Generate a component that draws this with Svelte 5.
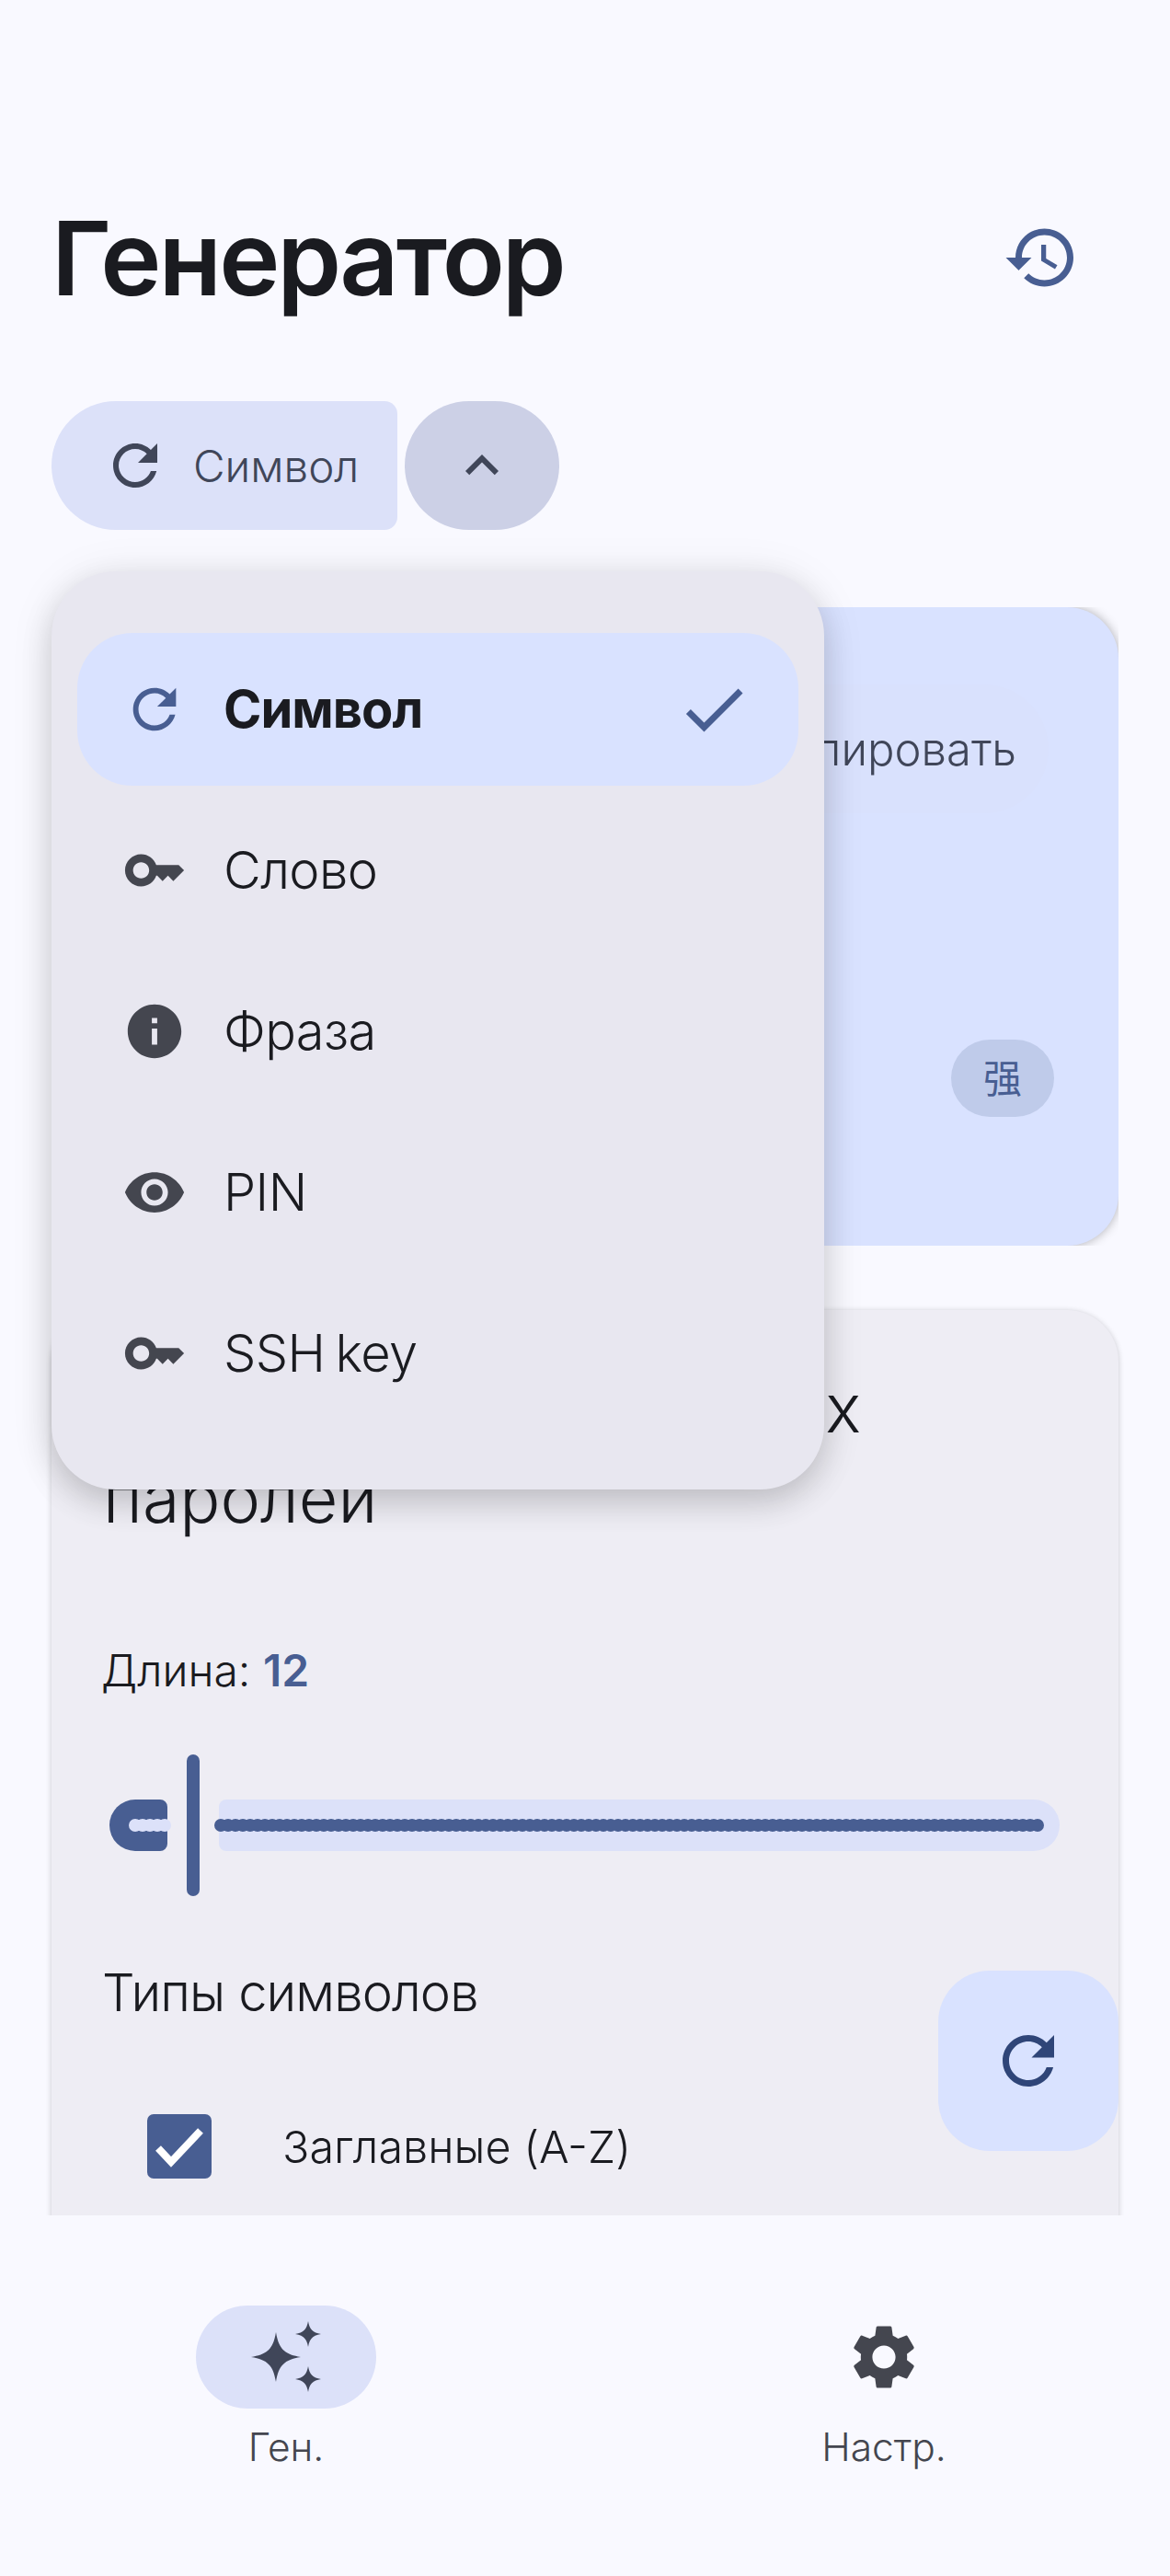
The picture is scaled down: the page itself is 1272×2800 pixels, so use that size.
<script lang="ts">
    const refresh = 'M17.65 6.35C16.2 4.9 14.21 4 12 4c-4.42 0-7.99 3.58-7.99 8s3.57 8 7.99 8c3.73 0 6.84-2.55 7.73-6h-2.08c-.82 2.33-3.04 4-5.65 4-3.31 0-6-2.69-6-6s2.69-6 6-6c1.66 0 3.14.69 4.22 1.78L13 11h7V4l-2.35 2.35z';
    const key = 'M21 10h-8.35C11.83 7.67 9.61 6 7 6c-3.31 0-6 2.69-6 6s2.69 6 6 6c2.61 0 4.83-1.67 5.65-4H13l2 2 2-2 2 2 4-4.04L21 10zM7 15c-1.65 0-3-1.35-3-3s1.35-3 3-3 3 1.35 3 3-1.35 3-3 3z';
    const info = 'M12 2C6.48 2 2 6.48 2 12s4.48 10 10 10 10-4.48 10-10S17.52 2 12 2zm1 15h-2v-6h2v6zm0-8h-2V7h2v2z';
    const eye = 'M12 4.5C7 4.5 2.73 7.61 1 12c1.73 4.39 6 7.5 11 7.5s9.27-3.11 11-7.5c-1.73-4.39-6-7.5-11-7.5zM12 17c-2.76 0-5-2.24-5-5s2.24-5 5-5 5 2.24 5 5-2.24 5-5 5zm0-8c-1.66 0-3 1.34-3 3s1.34 3 3 3 3-1.34 3-3-1.34-3-3-3z';

    const items = [
        { label: 'Символ', icon: refresh, selected: true },
        { label: 'Слово', icon: key, selected: false },
        { label: 'Фраза', icon: info, selected: false },
        { label: 'PIN', icon: eye, selected: false },
        { label: 'SSH key', icon: key, selected: false }
    ];
</script>

<div class="screen">
    <header class="top">
        <h1>Генератор</h1>
        <button class="icon-btn" aria-label="История">
            <svg viewBox="0 0 24 24" width="84" height="84"><path d="M13 3c-4.97 0-9 4.03-9 9H1l3.89 3.89.07.14L9 12H6c0-3.87 3.13-7 7-7s7 3.13 7 7-3.13 7-7 7c-1.93 0-3.68-.79-4.94-2.06l-1.42 1.42C8.27 19.99 10.51 21 13 21c4.97 0 9-4.03 9-9s-4.03-9-9-9zm-1 5v5l4.28 2.54.72-1.21-3.5-2.08V8H12z"/></svg>
        </button>
    </header>

    <div class="split">
        <button class="split-main">
            <svg viewBox="0 0 24 24" width="72" height="72"><path d={refresh}/></svg>
            <span>Символ</span>
        </button>
        <button class="split-toggle" aria-label="Свернуть">
            <svg viewBox="0 0 24 24" width="72" height="72"><path d="M12 8l-6 6 1.41 1.41L12 10.83l4.59 4.58L18 14z"/></svg>
        </button>
    </div>

    <main class="scroll">
        <div class="result-clip">
            <section class="result">
                <div class="copy">Копировать</div>
                <div class="chip">强</div>
            </section>
        </div>

        <section class="options">
            <h2>Настройки безопасных<br>паролей</h2>
            <p class="length">Длина: <b>12</b></p>

            <div class="slider">
                <div class="stop"></div>
                <div class="thumb"></div>
                <div class="track"></div>
                <svg class="wave" width="1034" height="14" viewBox="0 0 1034 14">
                    <line class="wave-off" x1="35" y1="7" x2="68" y2="7"/>
                    <line class="wave-on" x1="128" y1="7" x2="1017" y2="7"/>
                </svg>
            </div>

            <h3>Типы символов</h3>
            <div class="check-row">
                <span class="box">
                    <svg viewBox="0 0 70 70" width="70" height="70"><path d="M12 37l14 15 32-34" /></svg>
                </span>
                <span>Заглавные (A-Z)</span>
            </div>
        </section>
    </main>

    <nav class="bottom">
        <div class="tab">
            <span class="pill active">
                <svg viewBox="0 0 196 112" width="196" height="112">
                    <path d="M87 29c3 18 9 24 27 27-18 3-24 9-27 27-3-18-9-24-27-27 18-3 24-9 27-27z"/>
                    <path d="M122 17c1.500 9 5 12.500 14 14-9 1.500-12.500 5-14 14-1.500-9-5-12.500-14-14 9-1.500 12.500-5 14-14z"/>
                    <path d="M122 66c1.500 9 5 12.500 14 14-9 1.500-12.500 5-14 14-1.500-9-5-12.500-14-14 9-1.500 12.500-5 14-14z"/>
                </svg>
            </span>
            <span class="tab-label">Ген.</span>
        </div>
        <div class="tab">
            <span class="pill">
                <svg viewBox="0 0 24 24" width="84" height="84"><path d="M19.14 12.94c.04-.3.06-.61.06-.94 0-.32-.02-.64-.07-.94l2.03-1.58c.18-.14.23-.41.12-.61l-1.92-3.32c-.12-.22-.37-.29-.59-.22l-2.39.96c-.5-.38-1.03-.7-1.62-.94l-.36-2.54c-.04-.24-.24-.41-.48-.41h-3.84c-.24 0-.43.17-.47.41l-.36 2.54c-.59.24-1.13.57-1.62.94l-2.39-.96c-.22-.08-.47 0-.59.22L2.74 8.87c-.12.21-.08.47.12.61l2.03 1.58c-.05.3-.09.63-.09.94s.02.64.07.94l-2.03 1.58c-.18.14-.23.41-.12.61l1.92 3.32c.12.22.37.29.59.22l2.39-.96c.5.38 1.03.7 1.62.94l.36 2.54c.05.24.24.41.48.41h3.84c.24 0 .44-.17.47-.41l.36-2.54c.59-.24 1.13-.56 1.62-.94l2.39.96c.22.08.47 0 .59-.22l1.92-3.32c.12-.22.07-.47-.12-.61l-2.01-1.58zM12 15.6c-1.98 0-3.6-1.62-3.6-3.6s1.62-3.6 3.6-3.6 3.6 1.62 3.6 3.6-1.62 3.6-3.6 3.6z"/></svg>
            </span>
            <span class="tab-label">Настр.</span>
        </div>
    </nav>

    <button class="fab" aria-label="Обновить">
        <svg viewBox="0 0 24 24" width="84" height="84"><path d={refresh}/></svg>
    </button>

    <div class="menu-clip">
        <ul class="menu">
            {#each items as item}
                <li class:selected={item.selected}>
                    <svg class="menu-icon" viewBox="0 0 24 24" width="70" height="70"><path d={item.icon}/></svg>
                    <span class="menu-label">{item.label}</span>
                    {#if item.selected}
                        <svg class="tick" viewBox="0 0 24 24" width="84" height="84"><path d="M9 16.17L4.830 12l-1.42 1.41L9 19 21 7l-1.41-1.41z"/></svg>
                    {/if}
                </li>
            {/each}
        </ul>
    </div>
</div>

<style>
    :global(body) {
        margin: 0;
        background: #f9f9ff;
    }

    .screen {
        position: relative;
        width: 1272px;
        height: 2800px;
        display: flex;
        flex-direction: column;
        overflow: hidden;
        background: #f9f9ff;
        color: #1a1b20;
        font-family: Inter, "Noto Sans CJK SC", sans-serif;
    }

    button {
        border: none;
        padding: 0;
        font: inherit;
        background: none;
    }

    svg {
        display: block;
        fill: currentColor;
    }

    .top {
        display: flex;
        align-items: center;
        justify-content: space-between;
        height: 168px;
        margin-top: 196px;
        padding: 0 56px;
    }

    h1 {
        margin: 0;
        font-size: 112px;
        font-weight: 600;
        letter-spacing: -3px;
    }

    .icon-btn {
        width: 168px;
        height: 168px;
        display: flex;
        align-items: center;
        justify-content: center;
        color: #485e92;
    }

    .split {
        display: flex;
        gap: 8px;
        margin: 72px 0 84px 56px;
    }

    .split-main {
        display: flex;
        align-items: center;
        gap: 27px;
        width: 376px;
        height: 140px;
        padding-left: 55px;
        box-sizing: border-box;
        border-radius: 70px 14px 14px 70px;
        background: #dce1f9;
        color: #404659;
        font-size: 47.500px;
        font-weight: 350;
    }

    .split-toggle {
        display: flex;
        align-items: center;
        justify-content: center;
        width: 168px;
        height: 140px;
        border-radius: 70px;
        background: #ccd0e6;
        color: #404659;
    }

    .scroll {
        flex: 1;
        min-height: 0;
        overflow: hidden;
        padding: 0 56px;
    }

    .result-clip {
        height: 694px;
        overflow: hidden;
    }

    .result {
        position: relative;
        height: 694px;
        border-radius: 56px;
        background: #d9e2ff;
        box-shadow: 0 0 12px rgba(0, 0, 0, 0.3);
    }

    .copy {
        position: absolute;
        right: 76px;
        top: 84px;
        height: 140px;
        padding: 0 35px 0 56px;
        display: flex;
        align-items: center;
        border-radius: 70px;
        background: #d9e1fd;
        color: #404659;
        font-size: 49px;
        font-weight: 350;
    }

    .chip {
        position: absolute;
        right: 70px;
        top: 470px;
        width: 112px;
        height: 84px;
        padding-bottom: 5px;
        box-sizing: border-box;
        display: flex;
        align-items: center;
        justify-content: center;
        border-radius: 42px;
        background: #bfcbea;
        color: #485e92;
        font-size: 42px;
    }

    .options {
        margin-top: 70px;
        min-height: 1200px;
        padding: 58px 56px;
        border-radius: 56px;
        background: #eeedf4;
        box-shadow: 0 1px 6px rgba(0, 0, 0, 0.2);
    }

    h2 {
        margin: 0;
        font-size: 73.500px;
        line-height: 98px;
        font-weight: 300;
    }

    .length {
        margin: 103px 0 0 -2px;
        font-size: 48px;
        line-height: 70px;
        font-weight: 350;
    }

    .length b {
        color: #485e92;
        font-weight: 600;
    }

    .slider {
        position: relative;
        height: 154px;
        margin-top: 56px;
    }

    .stop {
        position: absolute;
        left: 7px;
        top: 49px;
        width: 63px;
        height: 56px;
        border-radius: 28px 8px 8px 28px;
        background: #485e92;
    }

    .thumb {
        position: absolute;
        left: 91px;
        top: 0;
        width: 14px;
        height: 154px;
        border-radius: 7px;
        background: #485e92;
    }

    .track {
        position: absolute;
        left: 126px;
        top: 49px;
        width: 914px;
        height: 56px;
        border-radius: 8px 28px 28px 8px;
        background: #dce1f9;
    }

    .wave {
        position: absolute;
        left: 0;
        top: 70px;
        fill: none;
    }

    .wave line {
        stroke-width: 14;
        stroke-linecap: round;
        stroke-dasharray: 0 8;
    }

    .wave-on {
        stroke: #485e92;
    }

    .wave-off {
        stroke: #dce1f9;
    }

    h3 {
        margin: 63px 0 0 -1px;
        font-size: 56px;
        line-height: 84px;
        font-weight: 350;
        letter-spacing: -0.900px;
    }

    .check-row {
        display: flex;
        align-items: center;
        gap: 77px;
        margin: 90px 0 0 48px;
        font-size: 48.500px;
        font-weight: 350;
    }

    .box {
        width: 70px;
        height: 70px;
        border-radius: 7px;
        background: #485e92;
    }

    .box svg {
        fill: none;
        stroke: #fff;
        stroke-width: 8;
    }

    .bottom {
        height: 392px;
        display: flex;
        gap: 454px;
        padding: 98px 0 0 213px;
        box-sizing: border-box;
        background: #f9f9ff;
        position: relative;
    }

    .tab {
        width: 196px;
        display: flex;
        flex-direction: column;
        align-items: center;
        gap: 14px;
        color: #44464f;
    }

    .pill {
        width: 196px;
        height: 112px;
        display: flex;
        align-items: center;
        justify-content: center;
        border-radius: 56px;
    }

    .pill.active {
        background: #dce1f9;
        color: #404659;
    }

    .tab-label {
        font-size: 42.500px;
        line-height: 56px;
        font-weight: 350;
    }

    .fab {
        position: absolute;
        left: 1020px;
        top: 2142px;
        width: 196px;
        height: 196px;
        display: flex;
        align-items: center;
        justify-content: center;
        border-radius: 56px;
        background: #d9e2ff;
        color: #2f4578;
    }

    .menu-clip {
        position: absolute;
        left: 0;
        top: 560px;
        width: 954px;
        height: 1115px;
        overflow: hidden;
    }

    .menu {
        list-style: none;
        box-sizing: border-box;
        position: absolute;
        left: 56px;
        top: 61px;
        width: 840px;
        height: 998px;
        margin: 0;
        padding: 67px 28px;
        border-radius: 70px;
        background: #e8e7f0;
        box-shadow: 0 14px 34px rgba(0, 0, 0, 0.16), 0 4px 50px rgba(0, 0, 0, 0.08);
    }

    .menu li {
        display: flex;
        align-items: center;
        height: 175px;
        padding: 0 50px 0 49px;
        color: #44464f;
    }

    .menu li.selected {
        height: 166px;
        margin: 0 0 4px;
        border-radius: 60px;
        background: #d9e2ff;
        color: #485e92;
    }

    .menu-label {
        flex: 1;
        margin-left: 40px;
        color: #1a1b20;
        font-size: 56px;
        font-weight: 350;
        letter-spacing: -0.600px;
        word-spacing: -4px;
    }

    .selected .menu-label {
        font-weight: 700;
        letter-spacing: -1px;
    }
</style>
